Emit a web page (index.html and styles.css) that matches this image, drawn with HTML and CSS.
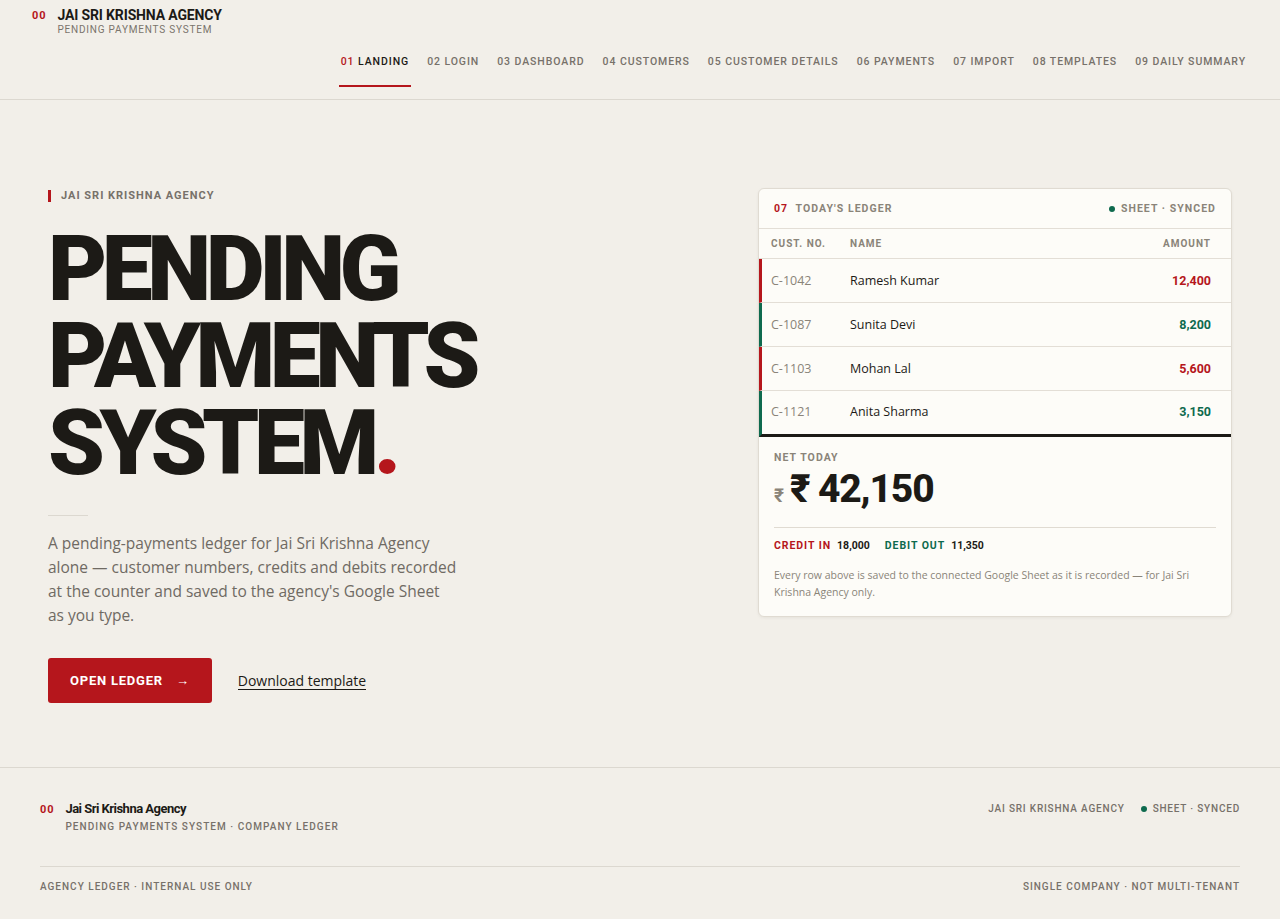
FILE: index.html
```html
<!DOCTYPE html>
<html lang="en">
<head>
<meta charset="utf-8">
<title>Jai Sri Krishna Agency — Pending Payments System</title>
<link rel="stylesheet" href="styles.css">
</head>
<body>
<header class="topbar">
  <div class="brand">
    <span class="brand-num">00</span>
    <div class="brand-text">
      <div class="brand-name">JAI SRI KRISHNA AGENCY</div>
      <div class="brand-sub">PENDING PAYMENTS SYSTEM</div>
    </div>
  </div>
  <nav class="nav">
    <a class="nav-item active" href="#"><span class="num">01</span> LANDING</a>
    <a class="nav-item" href="#">02 LOGIN</a>
    <a class="nav-item" href="#">03 DASHBOARD</a>
    <a class="nav-item" href="#">04 CUSTOMERS</a>
    <a class="nav-item" href="#">05 CUSTOMER DETAILS</a>
    <a class="nav-item" href="#">06 PAYMENTS</a>
    <a class="nav-item" href="#">07 IMPORT</a>
    <a class="nav-item" href="#">08 TEMPLATES</a>
    <a class="nav-item" href="#">09 DAILY SUMMARY</a>
  </nav>
</header>

<main class="hero">
  <section class="hero-left">
    <div class="kicker"><span class="kicker-bar"></span>JAI SRI KRISHNA AGENCY</div>
    <h1 class="title"><span class="t-line">PENDING</span><span class="t-line">PAYMENTS</span><span class="t-line">SYSTEM<span class="dot">.</span></span></h1>
    <div class="short-rule"></div>
    <p class="lead">A pending-payments ledger for Jai Sri Krishna Agency alone — customer numbers, credits and debits recorded at the counter and saved to the agency's Google Sheet as you type.</p>
    <div class="actions">
      <a class="btn-primary" href="#">OPEN LEDGER <span class="arrow">→</span></a>
      <a class="link" href="#">Download template</a>
    </div>
  </section>

  <aside class="card">
    <div class="card-head">
      <div class="card-title"><span class="num">07</span> TODAY'S LEDGER</div>
      <div class="sync"><span class="sync-dot"></span>SHEET · SYNCED</div>
    </div>
    <div class="table">
      <div class="thead">
        <span class="c-no">CUST. NO.</span>
        <span class="c-name">NAME</span>
        <span class="c-amt">AMOUNT</span>
      </div>
      <div class="row credit">
        <span class="c-no">C-1042</span>
        <span class="c-name">Ramesh Kumar</span>
        <span class="c-amt">12,400</span>
      </div>
      <div class="row debit">
        <span class="c-no">C-1087</span>
        <span class="c-name">Sunita Devi</span>
        <span class="c-amt">8,200</span>
      </div>
      <div class="row credit">
        <span class="c-no">C-1103</span>
        <span class="c-name">Mohan Lal</span>
        <span class="c-amt">5,600</span>
      </div>
      <div class="row debit">
        <span class="c-no">C-1121</span>
        <span class="c-name">Anita Sharma</span>
        <span class="c-amt">3,150</span>
      </div>
    </div>
    <div class="net">
      <div class="net-label">NET TODAY</div>
      <div class="net-value"><span class="cur">₹</span><span class="big">₹ 42,150</span></div>
      <div class="net-split">
        <span class="lbl red">CREDIT IN</span><span class="val">18,000</span>
        <span class="lbl green">DEBIT OUT</span><span class="val">11,350</span>
      </div>
      <p class="note">Every row above is saved to the connected Google Sheet as it is recorded — for Jai Sri Krishna Agency only.</p>
    </div>
  </aside>
</main>

<footer class="footer">
  <div class="footer-top">
    <div class="f-brand">
      <span class="brand-num">00</span>
      <div>
        <div class="f-name">Jai Sri Krishna Agency</div>
        <div class="f-sub">PENDING PAYMENTS SYSTEM · COMPANY LEDGER</div>
      </div>
    </div>
    <div class="f-right">
      <span>JAI SRI KRISHNA AGENCY</span>
      <span class="f-sync"><span class="sync-dot"></span>SHEET · SYNCED</span>
    </div>
  </div>
  <div class="footer-bottom">
    <span>AGENCY LEDGER · INTERNAL USE ONLY</span>
    <span>SINGLE COMPANY · NOT MULTI-TENANT</span>
  </div>
</footer>
</body>
</html>
```

FILE: styles.css
```css
* { box-sizing: border-box; }
html, body { margin: 0; padding: 0; }
body {
  background: #f2efe9;
  color: #1c1a16;
  font-family: "Open Sans", "Noto Sans", sans-serif;
  width: 1280px;
}
a { text-decoration: none; color: inherit; }

/* ---------- header ---------- */
.topbar {
  height: 100px;
  border-bottom: 1px solid #dcd8d0;
  padding: 6px 32px 0;
  display: flex;
  justify-content: space-between;
  align-items: flex-start;
}
.brand { display: flex; gap: 11px; align-items: flex-start; }
.brand-num {
  color: #b5161c;
  font-family: Roboto, sans-serif;
  font-weight: 700;
  font-size: 11px;
  letter-spacing: 0.08em;
  line-height: 18px;
  padding-top: 1px;
}
.brand-name {
  font-family: Roboto, sans-serif;
  font-weight: 700;
  font-size: 14px;
  line-height: 18px;
  letter-spacing: -0.01em;
  color: #1c1a16;
}
.brand-sub {
  font-family: Roboto, sans-serif;
  font-size: 10px;
  line-height: 12px;
  letter-spacing: 0.08em;
  color: #7a746c;
}
.nav {
  align-self: flex-end;
  display: flex;
  gap: 14px;
  margin-bottom: 12px;
}
.nav-item {
  font-family: Roboto, sans-serif;
  font-weight: 500;
  font-size: 10.5px;
  letter-spacing: 0.088em;
  color: #77716a;
  line-height: 14px;
  padding: 1px 2px 16px;
  border-bottom: 2px solid transparent;
}
.nav-item.active { color: #1c1a16; border-bottom-color: #b5161c; }
.nav-item .num { color: #b5161c; }

/* ---------- hero ---------- */
.hero {
  display: grid;
  grid-template-columns: 1fr 474px;
  align-items: start;
  padding: 88px 48px 64px;
  border-bottom: 1px solid #dcd8d0;
}
.kicker {
  display: flex;
  align-items: center;
  gap: 10px;
  font-family: Roboto, sans-serif;
  font-weight: 700;
  font-size: 11px;
  letter-spacing: 0.09em;
  color: #77716a;
  line-height: 16px;
}
.kicker-bar { width: 3px; height: 12px; background: #b5161c; }
.title {
  margin: 22px 0 0;
  font-family: Roboto, sans-serif;
  font-weight: 900;
  font-size: 91px;
  line-height: 87px;
  letter-spacing: -0.06em;
  color: #1c1a16;
}
.t-line { display: block; height: 87px; }
.title .dot { color: #b5161c; }
.short-rule { width: 40px; height: 1px; background: #dcd8d0; margin-top: 28px; }
.lead {
  margin: 15px 0 0;
  max-width: 410px;
  font-size: 15.5px;
  line-height: 24px;
  color: #6f6a63;
}
.actions { display: flex; align-items: center; gap: 26px; margin-top: 31px; }
.btn-primary {
  display: inline-flex;
  align-items: center;
  gap: 13px;
  height: 45px;
  padding: 0 22px;
  background: #b5161c;
  color: #fff;
  border-radius: 3px;
  font-family: Roboto, sans-serif;
  font-weight: 700;
  font-size: 13px;
  letter-spacing: 0.06em;
}
.btn-primary .arrow { font-weight: 400; }
.link {
  font-size: 14px;
  color: #1c1a16;
  border-bottom: 1px solid #1c1a16;
  line-height: 17px;
}

/* ---------- card ---------- */
.card {
  background: #fdfcf8;
  border: 1px solid #e0dbd2;
  border-radius: 6px;
  box-shadow: 0 1px 3px rgba(40, 30, 20, 0.06);
  overflow: hidden;
}
.card-head {
  height: 40px;
  padding: 0 15px;
  border-bottom: 1px solid #e3ded6;
  display: flex;
  justify-content: space-between;
  align-items: center;
  font-family: Roboto, sans-serif;
  font-weight: 700;
  font-size: 10.5px;
  letter-spacing: 0.1em;
  color: #8a8479;
}
.card-title .num { color: #b5161c; margin-right: 4px; }
.sync { display: flex; align-items: center; gap: 6px; }
.sync-dot { width: 6px; height: 6px; border-radius: 50%; background: #0e6a4e; display: inline-block; }

.thead, .row {
  display: grid;
  grid-template-columns: 79px 1fr auto;
  align-items: center;
  padding: 0 20px 0 12px;
}
.thead {
  height: 30px;
  border-bottom: 1px solid #e3ded6;
  font-family: Roboto, sans-serif;
  font-weight: 700;
  font-size: 10px;
  letter-spacing: 0.1em;
  color: #8a8479;
}
.row {
  height: 44px;
  border-bottom: 1px solid #e3ded6;
  border-left: 3px solid #b5161c;
  padding-left: 9px;
  font-size: 12.5px;
}
.row.debit { border-left-color: #0e6a4e; }
.row:last-child { border-bottom: 3px solid #1c1a16; height: 46px; padding-bottom: 2px; }
.row .c-no { color: #8a8479; }
.row .c-name { color: #1c1a16; }
.row .c-amt { font-family: Roboto, sans-serif; font-weight: 700; font-size: 12.5px; }
.row.credit .c-amt { color: #b5161c; }
.row.debit .c-amt { color: #0e6a4e; }
.c-amt { text-align: right; }

.net { padding: 14px 15px 15px; }
.net-label {
  font-family: Roboto, sans-serif;
  font-weight: 700;
  font-size: 10.5px;
  letter-spacing: 0.1em;
  color: #8a8479;
  line-height: 14px;
}
.net-value {
  display: flex;
  align-items: baseline;
  gap: 6px;
  padding-bottom: 9px;
  border-bottom: 1px solid #e0dbd2;
  line-height: 44px;
  margin-top: 2px;
}
.net-value .cur { font-family: Roboto, sans-serif; font-weight: 700; font-size: 19px; color: #8a8479; }
.net-value .big {
  font-family: Roboto, sans-serif;
  font-weight: 800;
  font-size: 39px;
  letter-spacing: -0.03em;
  color: #1c1a16;
}
.net-split {
  margin-top: 11px;
  display: flex;
  align-items: center;
  font-family: Roboto, sans-serif;
  font-weight: 700;
  font-size: 10.5px;
  line-height: 14px;
}
.net-split .lbl { letter-spacing: 0.09em; margin-right: 6px; }
.net-split .val { color: #1c1a16; margin-right: 15px; }
.net-split .red { color: #b5161c; }
.net-split .green { color: #0e6a4e; }
.note {
  margin: 14px 0 0;
  font-size: 10.5px;
  line-height: 17px;
  color: #8a8479;
}

/* ---------- footer ---------- */
.footer { padding: 0 40px; }
.footer-top {
  display: flex;
  justify-content: space-between;
  align-items: flex-start;
  padding: 32px 0 32px;
  border-bottom: 1px solid #dcd8d0;
}
.f-brand { display: flex; gap: 11px; align-items: flex-start; }
.f-name {
  font-family: Roboto, sans-serif;
  font-weight: 700;
  font-size: 13px;
  letter-spacing: -0.04em;
  line-height: 18px;
  color: #1c1a16;
}
.f-sub, .f-right, .footer-bottom {
  font-family: Roboto, sans-serif;
  font-weight: 500;
  font-size: 10px;
  letter-spacing: 0.08em;
  color: #77716a;
}
.f-sub { margin-top: 2px; line-height: 14px; letter-spacing: 0.105em; }
.f-right { display: flex; align-items: center; gap: 16px; line-height: 18px; }
.f-sync { display: flex; align-items: center; gap: 6px; }
.footer-bottom {
  display: flex;
  justify-content: space-between;
  padding: 12px 0;
  line-height: 16px;
  letter-spacing: 0.1em;
}
```
